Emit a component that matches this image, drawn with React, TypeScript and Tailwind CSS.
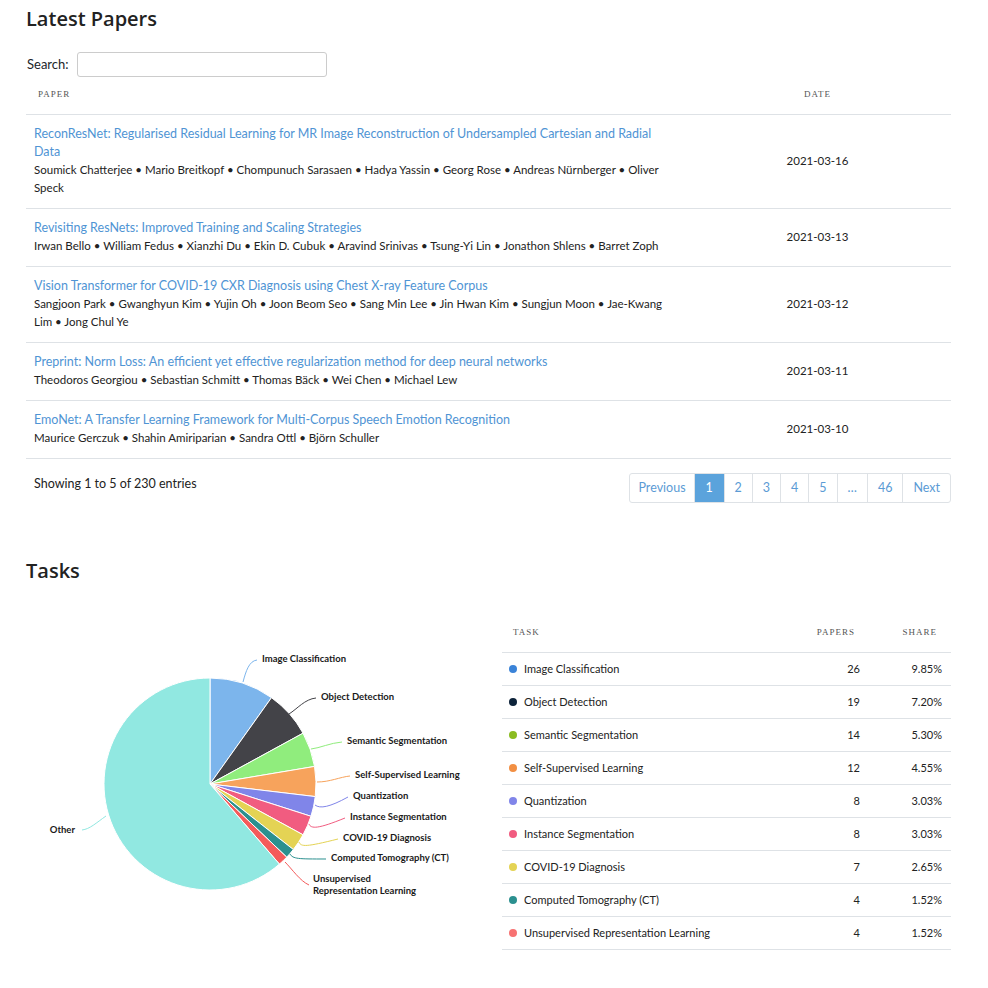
import React from "react";

const papers = [
  {
    title: "ReconResNet: Regularised Residual Learning for MR Image Reconstruction of Undersampled Cartesian and Radial Data",
    authors: ["Soumick Chatterjee", "Mario Breitkopf", "Chompunuch Sarasaen", "Hadya Yassin", "Georg Rose", "Andreas Nürnberger", "Oliver Speck"],
    date: "2021-03-16",
  },
  {
    title: "Revisiting ResNets: Improved Training and Scaling Strategies",
    authors: ["Irwan Bello", "William Fedus", "Xianzhi Du", "Ekin D. Cubuk", "Aravind Srinivas", "Tsung-Yi Lin", "Jonathon Shlens", "Barret Zoph"],
    date: "2021-03-13",
  },
  {
    title: "Vision Transformer for COVID-19 CXR Diagnosis using Chest X-ray Feature Corpus",
    authors: ["Sangjoon Park", "Gwanghyun Kim", "Yujin Oh", "Joon Beom Seo", "Sang Min Lee", "Jin Hwan Kim", "Sungjun Moon", "Jae-Kwang Lim", "Jong Chul Ye"],
    date: "2021-03-12",
  },
  {
    title: "Preprint: Norm Loss: An efficient yet effective regularization method for deep neural networks",
    authors: ["Theodoros Georgiou", "Sebastian Schmitt", "Thomas Bäck", "Wei Chen", "Michael Lew"],
    date: "2021-03-11",
  },
  {
    title: "EmoNet: A Transfer Learning Framework for Multi-Corpus Speech Emotion Recognition",
    authors: ["Maurice Gerczuk", "Shahin Amiriparian", "Sandra Ottl", "Björn Schuller"],
    date: "2021-03-10",
  },
];

const tasks = [
  { name: "Image Classification", papers: 26, share: "9.85%", slice: "#7cb5ec", dot: "#3a83d8", lx: 262, ly: 659, d: "M243 681 C246 670 249 660 257 659" },
  { name: "Object Detection", papers: 19, share: "7.20%", slice: "#434348", dot: "#0d233a", lx: 321, ly: 697, d: "M289 713 C297 708 305 698 316 697" },
  { name: "Semantic Segmentation", papers: 14, share: "5.30%", slice: "#90ed7d", dot: "#8bbc21", lx: 347, ly: 741, d: "M311 748 C320 747 330 742 342 741" },
  { name: "Self-Supervised Learning", papers: 12, share: "4.55%", slice: "#f7a35c", dot: "#f28f43", lx: 355, ly: 775, d: "M317 781 C330 781 340 776 350 775" },
  { name: "Quantization", papers: 8, share: "3.03%", slice: "#8085e9", dot: "#8085e9", lx: 353, ly: 796, d: "M315 804 C320 808 330 806 348 796" },
  { name: "Instance Segmentation", papers: 8, share: "3.03%", slice: "#f15c80", dot: "#f15c80", lx: 350, ly: 817, d: "M309 823 C311 828 318 828 345 817" },
  { name: "COVID-19 Diagnosis", papers: 7, share: "2.65%", slice: "#e4d354", dot: "#e4d354", lx: 343, ly: 838, d: "M299 841 C301 846 306 846 338 838" },
  { name: "Computed Tomography (CT)", papers: 4, share: "1.52%", slice: "#2b908f", dot: "#2b908f", lx: 331, ly: 858, d: "M290 853 C293 858 298 858 326 858" },
  { name: "Unsupervised Representation Learning", papers: 4, share: "1.52%", slice: "#f45b5b", dot: "#f77272", lx: 313, ly: 879, d: "M285 861 C292 868 300 880 309 884" },
];

const other = { value: 162, slice: "#91e8e1" };

const font = { fontFamily: "Lato, 'Open Sans', sans-serif" };

function PieChart() {
  const cx = 210;
  const cy = 783;
  const r = 106;
  const total = tasks.reduce((s, t) => s + t.papers, 0) + other.value;
  const slices = [...tasks.map((t) => ({ v: t.papers, c: t.slice })), { v: other.value, c: other.slice }];
  let a = 0;
  const paths = slices.map((s, i) => {
    const a0 = a;
    const a1 = a + (s.v / total) * Math.PI * 2;
    a = a1;
    const x0 = cx + r * Math.sin(a0);
    const y0 = cy - r * Math.cos(a0);
    const x1 = cx + r * Math.sin(a1);
    const y1 = cy - r * Math.cos(a1);
    const large = a1 - a0 > Math.PI ? 1 : 0;
    return (
      <path
        key={i}
        d={`M${cx} ${cy} L${x0} ${y0} A${r} ${r} 0 ${large} 1 ${x1} ${y1} Z`}
        fill={s.c}
        stroke="#fff"
        strokeWidth={1}
        strokeLinejoin="round"
      />
    );
  });

  return (
    <svg width={476} height={340} viewBox="26 610 476 340" className="mt-[4px] shrink-0">
      {paths}
      {tasks.map((t) => (
        <path key={t.name} d={t.d} fill="none" stroke={t.slice} strokeWidth={1} />
      ))}
      <path d="M106 815 C96 822 90 828 82 829" fill="none" stroke={other.slice} strokeWidth={1} />
      <g fontFamily="Lato, 'Open Sans', sans-serif" fontSize="9.5" fontWeight="700" fill="#1a1a1a">
        {tasks.map((t) =>
          t.name === "Unsupervised Representation Learning" ? (
            <text key={t.name} x={t.lx} y={t.ly} dominantBaseline="middle">
              <tspan x={t.lx} y={t.ly}>Unsupervised</tspan>
              <tspan x={t.lx} y={t.ly + 12}>Representation Learning</tspan>
            </text>
          ) : (
            <text key={t.name} x={t.lx} y={t.ly} dominantBaseline="middle">
              {t.name}
            </text>
          )
        )}
        <text x={75} y={830} textAnchor="end" dominantBaseline="middle">
          Other
        </text>
      </g>
    </svg>
  );
}

const thClass = "text-[9px] tracking-[1px] text-[#555] uppercase";
const thFont = { fontFamily: "'Liberation Serif', serif" };

export default function App() {
  const pages = ["Previous", "1", "2", "3", "4", "5", "…", "46", "Next"];
  return (
    <div className="w-[988px] bg-white px-[26px] pt-[5px] pb-10 text-[#212529]" style={font}>
      <h1 className="text-[20px] font-semibold leading-[28px] text-[#222]" style={{ fontFamily: "'Open Sans', sans-serif" }}>
        Latest Papers
      </h1>

      <div className="mt-[19px] flex items-center gap-[8px] pl-[1px]">
        <label className="text-[13px]">Search:</label>
        <input className="h-[25px] w-[250px] rounded-[3px] border border-[#ccc] outline-none" />
      </div>

      <div className="w-[925px]">
        <div className="flex h-[38px] items-center border-b border-[#dee2e6] pb-[1px]" style={thFont}>
          <div className={`w-[654px] pl-[12px] ${thClass}`}>Paper</div>
          <div className={`flex-1 pl-[4px] text-center ${thClass}`}>Date</div>
        </div>
        {papers.map((p) => (
          <div key={p.title} className="flex items-center border-b border-[#dee2e6] pt-[10px] pb-[11px] text-[11.5px] leading-[18px]">
            <div className="w-[654px] pl-[8px] pr-[1px]">
              <a href="#" className="block text-[12.5px] text-[#4f94d4]">
                {p.title}
              </a>
              <div className="text-[#222]">{p.authors.join(" • ")}</div>
            </div>
            <div className="flex-1 pl-[4px] text-center text-[11.5px] text-[#222]">{p.date}</div>
          </div>
        ))}

        <div className="mt-[14px] flex items-start justify-between">
          <div className="pl-[8px] pt-[2px] text-[12.5px] text-[#222]">Showing 1 to 5 of 230 entries</div>
          <div className="flex h-[30px] overflow-hidden rounded-[3px] border border-[#dee2e6] text-[12.5px]">
            {pages.map((pg, i) => (
              <div
                key={pg}
                className={`flex items-center justify-center ${pg === "Previous" ? "px-[8px]" : "px-[10px]"} ${
                  i > 0 ? "border-l border-[#dee2e6]" : ""
                } ${pg === "1" ? "w-[30px] bg-[#5ba3dc] text-white" : "text-[#5b9bd5]"}`}
              >
                {pg}
              </div>
            ))}
          </div>
        </div>

        <h2 className="mt-[53px] text-[20px] font-semibold leading-[30px] text-[#222]" style={{ fontFamily: "'Open Sans', sans-serif" }}>
          Tasks
        </h2>

        <div className="mt-[21px] flex items-start">
          <PieChart />
          <div className="w-[449px] pt-[12px]">
            <div className="grid h-[34px] grid-cols-[1fr_78px_83px] items-center border-b border-[#dee2e6] pb-[5px]" style={thFont}>
              <div className={`pl-[11px] ${thClass}`}>Task</div>
              <div className={`pr-[13px] text-right ${thClass}`}>Papers</div>
              <div className={`pr-[14px] text-right ${thClass}`}>Share</div>
            </div>
            {tasks.map((t) => (
              <div key={t.name} className="grid h-[33px] grid-cols-[1fr_78px_83px] items-center border-b border-[#dee2e6] text-[11px] text-[#222]">
                <div className="flex items-center gap-[7px] pl-[7px]">
                  <span className="h-[8px] w-[8px] rounded-full" style={{ backgroundColor: t.dot }} />
                  <span>{t.name}</span>
                </div>
                <div className="pr-[8px] text-right">{t.papers}</div>
                <div className="pr-[9px] text-right">{t.share}</div>
              </div>
            ))}
          </div>
        </div>
      </div>
    </div>
  );
}
